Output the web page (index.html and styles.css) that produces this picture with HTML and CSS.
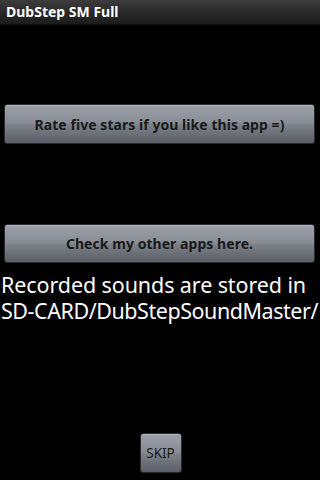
FILE: index.html
```html
<!DOCTYPE html>
<html>
<head>
<meta charset="utf-8">
<link rel="stylesheet" href="styles.css">
</head>
<body>
<div class="screen">
  <div class="titlebar">DubStep SM Full</div>
  <div class="content">
    <button class="btn btn-wide btn-rate">Rate five stars if you like this app =)</button>
    <button class="btn btn-wide btn-apps">Check my other apps here.</button>
    <p class="info"><span class="nw">Recorded sounds are stored in</span> <span class="nw path">SD-CARD/DubStepSoundMaster/</span></p>
    <div class="bottom">
      <button class="btn btn-skip">SKIP</button>
    </div>
  </div>
</div>
</body>
</html>
```
FILE: styles.css
```css
html, body {
  margin: 0;
  padding: 0;
  background: #000;
}
.screen {
  width: 320px;
  height: 480px;
  display: flex;
  flex-direction: column;
  font-family: "Noto Sans", "Open Sans", "DejaVu Sans", sans-serif;
  overflow: hidden;
}
.titlebar {
  height: 25px;
  box-sizing: border-box;
  padding-left: 6px;
  background: linear-gradient(#3c3c3c, #262626 60%, #1c1c1c);
  color: #fff;
  font-weight: bold;
  font-size: 14px;
  line-height: 24px;
  border-bottom: 1px solid #111;
}
.content {
  flex: 1;
  display: flex;
  flex-direction: column;
  padding: 0 0 7px 0;
}
.btn {
  border: 1px solid #2a2c30;
  border-radius: 3px;
  background: linear-gradient(#9ca1a9, #888d95 48%, #7d8289 52%, #5a5e66);
  color: #1a1a1a;
  font-family: inherit;
  padding: 0;
  box-shadow: inset 0 1px 0 rgba(255,255,255,0.22);
}
.btn-wide {
  margin: 0 5px 0 4px;
  height: 40px;
  font-weight: bold;
  font-size: 14px;
  letter-spacing: 0.05px;
}
.btn-rate {
  margin-top: 79px;
}
.btn-apps {
  margin-top: 80px;
  height: 39px;
}
.info {
  margin: 9px 0 0 0;
  color: #fff;
  font-size: 21.5px;
  line-height: 25.5px;
  padding-left: 1px;
  letter-spacing: -0.1px;
}
.nw {
  white-space: nowrap;
}
.path {
  letter-spacing: -0.45px;
}
.bottom {
  margin-top: auto;
  display: flex;
  justify-content: center;
}
.btn-skip {
  width: 42px;
  height: 40px;
  font-size: 13.5px;
  font-weight: normal;
  color: #1a1a1a;
  margin-left: 1px;
}
```
